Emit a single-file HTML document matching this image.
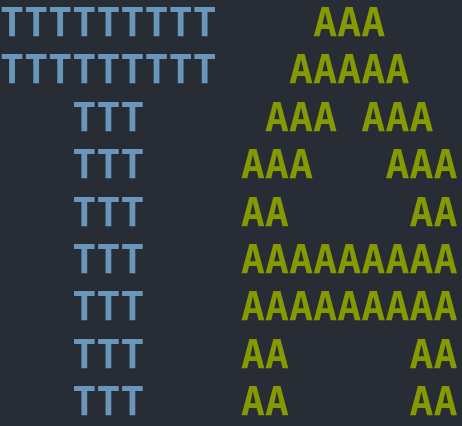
<!DOCTYPE html>
<html><head><style>
html,body{margin:0;padding:0;background:#282c34;width:462px;height:426px;overflow:hidden}
pre{margin:0;padding:0;font-family:"DejaVu Sans Mono","Liberation Mono",monospace;font-weight:bold;font-size:40px;line-height:47.4px;color:#6897bb;white-space:pre}
.a{color:#859900}
</style></head><body><pre>TTTTTTTTT    <span class="a">AAA</span>
TTTTTTTTT   <span class="a">AAAAA</span>
   TTT     <span class="a">AAA AAA</span>
   TTT    <span class="a">AAA   AAA</span>
   TTT    <span class="a">AA     AA</span>
   TTT    <span class="a">AAAAAAAAA</span>
   TTT    <span class="a">AAAAAAAAA</span>
   TTT    <span class="a">AA     AA</span>
   TTT    <span class="a">AA     AA</span></pre></body></html>
